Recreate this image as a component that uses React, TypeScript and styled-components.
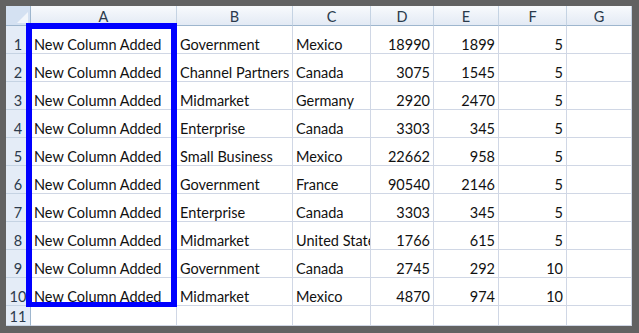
import styled, { createGlobalStyle } from 'styled-components';

const GlobalStyle = createGlobalStyle`
  html, body {
    margin: 0;
    padding: 0;
    background: #626262;
  }
  * {
    box-sizing: border-box;
  }
`;

const columns = ['A', 'B', 'C', 'D', 'E', 'F', 'G'];
const colWidths = [146, 116, 78, 63, 65, 68, 65];

type Row = [string, string, string, number, number, number];

const rows: Row[] = [
  ['New Column Added', 'Government', 'Mexico', 18990, 1899, 5],
  ['New Column Added', 'Channel Partners', 'Canada', 3075, 1545, 5],
  ['New Column Added', 'Midmarket', 'Germany', 2920, 2470, 5],
  ['New Column Added', 'Enterprise', 'Canada', 3303, 345, 5],
  ['New Column Added', 'Small Business', 'Mexico', 22662, 958, 5],
  ['New Column Added', 'Government', 'France', 90540, 2146, 5],
  ['New Column Added', 'Enterprise', 'Canada', 3303, 345, 5],
  ['New Column Added', 'Midmarket', 'United States of America', 1766, 615, 5],
  ['New Column Added', 'Government', 'Canada', 2745, 292, 10],
  ['New Column Added', 'Midmarket', 'Mexico', 4870, 974, 10],
];

const Frame = styled.div`
  width: 639px;
  height: 333px;
  padding: 6px 7px 7px 6px;
  background: #626262;
`;

const Sheet = styled.div`
  position: relative;
  display: grid;
  grid-template-columns: 25px ${colWidths.map((w) => `${w}px`).join(' ')};
  grid-template-rows: 20px repeat(10, 28px) 20px;
  background: #ffffff;
  font-family: Lato, 'Liberation Sans', sans-serif;
  font-size: 14.5px;
  line-height: 17px;
  color: #111111;
`;

const Corner = styled.div`
  display: flex;
  align-items: flex-end;
  justify-content: flex-end;
  padding: 0 2px 2px 0;
  background: #d4e1f2;
  border-right: 1px solid #9eb6ce;
  border-bottom: 1px solid #9eb6ce;
`;

const ColHeader = styled.div`
  display: flex;
  align-items: center;
  justify-content: center;
  background: linear-gradient(#f8fafd, #e3eaf4);
  border-right: 1px solid #c5d3e3;
  border-bottom: 1px solid #9eb6ce;
  color: #2b3a4c;
  padding-top: 2px;
`;

const RowHeader = styled.div`
  display: flex;
  align-items: flex-end;
  justify-content: center;
  background: #e4ecf7;
  border-right: 1px solid #9eb6ce;
  border-bottom: 1px solid #c5d3e3;
  color: #2b3a4c;
`;

// excel cells sit on the bottom edge, numbers go right
const Cell = styled.div<{ num?: boolean }>`
  display: flex;
  align-items: flex-end;
  justify-content: ${(p) => (p.num ? 'flex-end' : 'flex-start')};
  padding: 0 3px;
  border-right: 1px solid #d0d7e5;
  border-bottom: 1px solid #d0d7e5;
  white-space: nowrap;
  overflow: hidden;
`;

// blue selection drawn over column A
const Highlight = styled.div`
  position: absolute;
  left: 20px;
  top: 17px;
  width: 151px;
  height: 284px;
  border: 6px solid #0000ff;
  border-bottom-width: 5px;
  pointer-events: none;
`;

export default function App() {
  return (
    <>
      <GlobalStyle />
      <Frame>
        <Sheet>
          <Corner>
            <svg width='11' height='11' viewBox='0 0 11 11'>
              <polygon points='11,0 11,11 0,11' fill='#f2f6fb' />
            </svg>
          </Corner>
          {columns.map((c) => (
            <ColHeader key={c}>{c}</ColHeader>
          ))}
          {rows.map((r, i) => (
            <>
              <RowHeader key={`h${i}`}>{i + 1}</RowHeader>
              <Cell>{r[0]}</Cell>
              <Cell>{r[1]}</Cell>
              <Cell>{r[2]}</Cell>
              <Cell num>{r[3]}</Cell>
              <Cell num>{r[4]}</Cell>
              <Cell num>{r[5]}</Cell>
              <Cell />
            </>
          ))}
          <RowHeader>11</RowHeader>
          {columns.map((c) => (
            <Cell key={`e${c}`} />
          ))}
          <Highlight />
        </Sheet>
      </Frame>
    </>
  );
}
